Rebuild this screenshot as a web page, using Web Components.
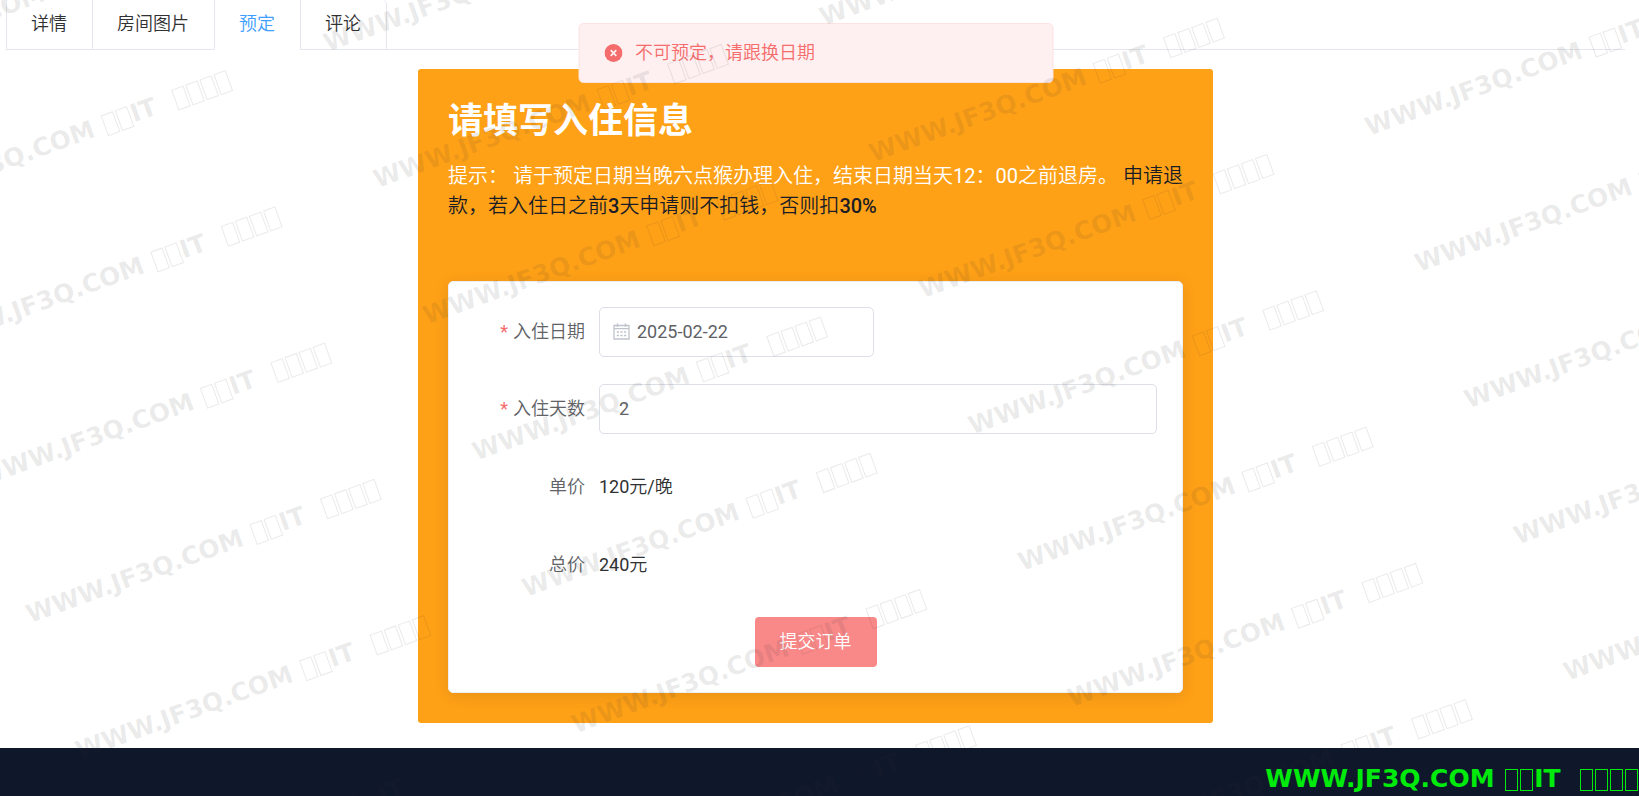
<!DOCTYPE html>
<html lang="zh-CN">
<head>
<meta charset="utf-8">
<title>预定</title>
<style>
html { background: #fff; }
body { margin: 0; font: 18px/24px Roboto, "Noto Sans CJK SC DemiLight", "Noto Sans CJK SC Light", "Noto Sans CJK SC", sans-serif; color: #303133; }
</style>
</head>
<body>
<booking-page></booking-page>
<script>
const define = (name, html, init) => customElements.define(name, class extends HTMLElement {
  connectedCallback() {
    if (this.shadowRoot) return;
    const t = document.createElement('template');
    t.innerHTML = html.trim();
    this.attachShadow({ mode: 'open' }).append(t.content.cloneNode(true));
    if (init) init(this, this.shadowRoot);
  }
});

define('tab-strip', `
<style>
:host { display: block; border-bottom: 1px solid #e4e7ed; }
nav { display: inline-flex; vertical-align: top; border: 1px solid #e4e7ed; border-width: 0 1px; border-radius: 0 5px 0 0; margin-bottom: -1px; }
</style>
<nav><slot></slot></nav>`);

define('tab-item', `
<style>
:host { display: block; border-left: 1px solid #e4e7ed; border-bottom: 1px solid #e4e7ed; }
:host(:first-child) { border-left: 0; }
:host([active]) { border-bottom-color: #fff; }
a { display: block; padding: 0 25px 1px 24px; line-height: 48px; color: inherit; text-decoration: none; }
:host([active]) a { color: #409eff; }
</style>
<a href="#"><slot></slot></a>`);

define('alert-message', `
<style>
:host { display: flex; align-items: center; gap: 13px; box-sizing: border-box; width: 475px; height: 60px; padding: 0 25px; border: 1px solid #fde2e2; border-radius: 5px; background: #fef0f0; color: #f56c6c; }
svg { width: 18px; height: 18px; flex: none; }
</style>
<svg viewBox="0 0 18 18"><circle cx="9" cy="9" r="9" fill="#f56c6c"/><path d="M6.2 6.2l5.6 5.6M11.8 6.2l-5.6 5.6" stroke="#fef0f0" stroke-width="1.7"/></svg>
<span role="alert"><slot></slot></span>`);

define('form-row', `
<style>
:host { display: flex; align-items: center; height: 51px; margin-bottom: 27px; }
:host([type]) { height: 50px; }
label { box-sizing: border-box; width: 125px; padding-right: 14px; text-align: right; color: #606266; flex: none; }
:host([required]) label::before { content: "*"; color: #f56c6c; margin-right: 5px; }
.body { flex: 1; display: flex; align-items: center; }
.box { display: flex; align-items: center; box-sizing: border-box; height: 50px; border: 1px solid #dcdfe6; border-radius: 5px; padding: 0 19px; background: #fff; flex: 1; }
.box.date { flex: none; width: 275px; padding: 0 13px; gap: 6px; }
input { flex: 1; min-width: 0; border: 0; outline: 0; padding: 0; background: none; font: inherit; color: #606266; }
svg { width: 18px; height: 18px; flex: none; }
</style>
<label for="field"><slot name="label"></slot></label><div class="body"><slot></slot></div>`,
(host, root) => {
  const type = host.getAttribute('type');
  if (!type) return;
  const icon = type === 'date' ? `<svg viewBox="0 0 18 18" fill="none" stroke="#c0c4cc"><path d="M1 2.5h15v13.5h-15zM1 5.7h15" stroke-width="1.3"/><path d="M4.5 0.5v3.4M12.5 0.5v3.4" stroke-width="1.5"/><path d="M3.8 9h2.2M7.4 9h2.2M11 9h2.2M3.8 12.5h2.2M7.4 12.5h2.2M11 12.5h2.2" stroke-width="1.4"/></svg>` : '';
  root.querySelector('.body').innerHTML = `<div class="box ${type}">${icon}<input id="field" type="text" value="${host.getAttribute('value')}"></div>`;
});

define('submit-button', `
<style>
:host { display: flex; justify-content: center; }
button { height: 50px; padding: 0 25px; border: 0; border-radius: 4px; background: #f98989; color: #fff; font: inherit; }
</style>
<button type="submit"><slot></slot></button>`);

define('booking-card', `
<style>
:host { display: block; box-sizing: border-box; width: 795px; max-width: 100%; margin: 19px auto 25px; padding: 30px; border-radius: 3px; background: #ffa117; }
h1 { margin: 0; font-size: 35px; line-height: 46px; font-weight: 700; font-family: Roboto, "Noto Sans CJK SC", sans-serif; color: #fff; }
p { margin: 16px 0 60px; font-size: 20px; line-height: 30px; color: #fff; }
strong { font-weight: 400; color: #1a1d26; }
b { font-weight: 500; }
form { border: 1px solid #ebeef5; border-radius: 5px; background: #fff; padding: 25px; box-shadow: 0 3px 15px rgba(0,0,0,.1); }
</style>
<h1>请填写入住信息</h1>
<p>提示： 请于预定日期当晚六点猴办理入住，结束日期当天12：00之前退房。 <strong>申请退款，若入住日之前<b>3</b>天申请则不扣钱，否则扣<b>30%</b></strong></p>
<form>
<form-row required type="date" value="2025-02-22"><span slot="label">入住日期</span></form-row>
<form-row required type="number" value="2"><span slot="label">入住天数</span></form-row>
<form-row><span slot="label">单价</span>120元/晚</form-row>
<form-row><span slot="label">总价</span>240元</form-row>
<submit-button>提交订单</submit-button>
</form>`);

define('site-mark', `
<style>
:host { display: block; white-space: pre; font: bold 25px/30px "DejaVu Sans", sans-serif; }
i { display: inline-block; box-sizing: border-box; width: 13px; height: 22px; margin: 0 1px; border: 1px solid; vertical-align: -4px; }
.gap { margin-left: 2px; }
</style>WWW.JF3Q.COM <i class="gap"></i><i></i>IT  <i class="gap"></i><i></i><i></i><i></i>`);

define('mark-field', `
<style>
:host { position: absolute; inset: 0; overflow: hidden; pointer-events: none; color: rgba(50,50,50,.1); }
.plane { position: absolute; left: 0; top: 0; transform: rotate(-20deg); transform-origin: 0 0; }
site-mark { position: absolute; }
</style>
<div class="plane"></div>`,
(host, root) => {
  const plane = root.querySelector('.plane');
  for (let c = -2; c < 4; c++) for (let r = -1; r < 14; r++) {
    const u = 290 + c * 475, v = 573 + (r - 4) * 145;
    const a = 20 * Math.PI / 180;
    const x = u * Math.cos(a) + v * Math.sin(a), y = v * Math.cos(a) - u * Math.sin(a);
    if (x < -400 || x > innerWidth || y < -30 || y > innerHeight + 140) continue;
    const m = document.createElement('site-mark');
    m.style.left = u + 'px';
    m.style.top = v + 'px';
    plane.append(m);
  }
});

define('booking-page', `
<style>
:host { display: flex; flex-direction: column; position: relative; min-height: 100vh; overflow: hidden; }
main { padding: 0 14px 0 6px; }
footer { flex: 1; min-height: 49px; box-sizing: border-box; padding-top: 16px; background: #0f172a; color: #00eb0c; display: flex; justify-content: flex-end; align-items: flex-start; }
alert-message { position: absolute; top: 23px; left: 50%; transform: translateX(-50%); margin-left: -4px; }
footer site-mark { position: relative; z-index: 1; }
</style>
<main>
<tab-strip><tab-item>详情</tab-item><tab-item>房间图片</tab-item><tab-item active>预定</tab-item><tab-item>评论</tab-item></tab-strip>
<booking-card></booking-card>
</main>
<footer><site-mark></site-mark></footer>
<alert-message>不可预定，请跟换日期</alert-message>
<mark-field></mark-field>`);
</script>
</body>
</html>
